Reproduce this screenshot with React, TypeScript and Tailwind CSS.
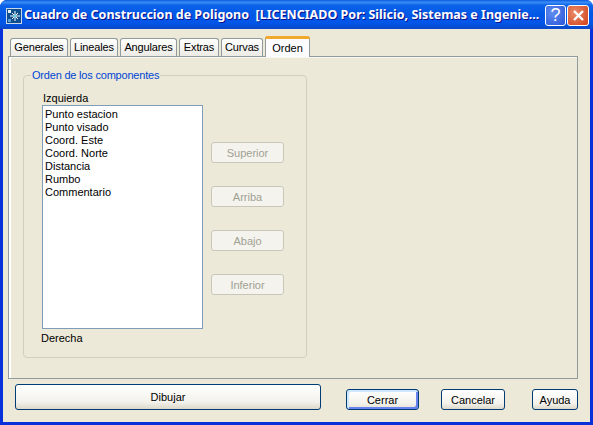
const tabs = [
  { label: "Generales", width: "w-[58px]" },
  { label: "Lineales", width: "w-[48px]" },
  { label: "Angulares", width: "w-[57px]" },
  { label: "Extras", width: "w-[40px]" },
  { label: "Curvas", width: "w-[42px]" },
];

const fields = [
  "Punto estacion",
  "Punto visado",
  "Coord. Este",
  "Coord. Norte",
  "Distancia",
  "Rumbo",
  "Commentario",
];

const moveButtons = ["Superior", "Arriba", "Abajo", "Inferior"];

const AppIcon = () => (
  <svg width="16" height="16" viewBox="0 0 16 16" className="shrink-0 mt-[1px]">
    <rect x="0.5" y="0.5" width="15" height="15" fill="#0f4f8f" stroke="#c8d8e8" />
    <rect x="2" y="2" width="3" height="3" fill="#e8f0f8" />
    <rect x="2" y="11" width="3" height="3" fill="#5aa0d8" />
    <path d="M9 3v10M4 8h10M6 5l6 6M12 5l-6 6" stroke="#ffffff" strokeWidth="1" />
    <rect x="8" y="7" width="2" height="2" fill="#60e0f0" />
  </svg>
);

const App = () => {
  return (
    <div className="w-[593px] h-[425px] flex flex-col bg-[#0831d9] rounded-t-[7px] overflow-hidden font-['Liberation_Sans',sans-serif] text-[11px] text-black">
      <div className="h-[29px] shrink-0 flex items-center pt-[1px] pl-[6px] pr-[4px] bg-[linear-gradient(180deg,#0a5be0_0%,#3a8cf5_8%,#0c62e8_18%,#0058e6_50%,#0255e8_80%,#0a48c8_100%)]">
        <AppIcon />
        <span className="ml-[2px] w-[518px] shrink-0 whitespace-pre font-['Noto_Sans',sans-serif] text-[12.5px] font-bold text-white [text-shadow:1px_1px_#0f1089]">
          Cuadro de Construccion de Poligono  [LICENCIADO Por: Silicio, Sistemas e Ingenie...
        </span>
        <button className="ml-auto w-[21px] h-[21px] rounded-[3px] border border-white bg-[radial-gradient(circle_at_35%_35%,#5f8df0,#2a55d8)] flex items-center justify-center font-['Liberation_Sans',sans-serif] text-[18px] text-white">
          ?
        </button>
        <button className="ml-[1px] w-[22px] h-[21px] rounded-[3px] border border-white bg-[radial-gradient(circle_at_35%_35%,#ea8a68,#d0421c)] flex items-center justify-center">
          <svg width="13" height="13" viewBox="0 0 13 13">
            <path d="M2 2l9 9M11 2l-9 9" stroke="#ffffff" strokeWidth="2.4" />
          </svg>
        </button>
      </div>

      <div className="flex-1 mx-[3px] mb-[3px] bg-[#ece9d8] flex flex-col">
        <div className="h-[27px] shrink-0 flex items-end pl-[7px] gap-[2px]">
          {tabs.map((tab) => (
            <div
              key={tab.label}
              className={`${tab.width} h-[18px] flex items-center justify-center rounded-t-[3px] border border-b-0 border-[#919b9c] bg-[linear-gradient(180deg,#ffffff,#ecebe5)] tracking-[-0.15px]`}
            >
              {tab.label}
            </div>
          ))}
          <div className="w-[45px] h-[21px] -mb-[1px] z-10 flex flex-col items-center rounded-t-[3px] border-x border-[#919b9c] bg-[#fcfcfe]">
            <div className="w-[45px] h-[3px] shrink-0 rounded-t-[3px] bg-[#f0a92c]" />
            <div className="flex-1 flex items-center">Orden</div>
          </div>
        </div>

        <div className="ml-[5px] w-[570px] h-[323px] shrink-0 border border-[#919b9c] bg-[#ece9d8] pl-[14px] pt-[18px] [box-shadow:inset_2px_0_#ffffff,inset_0_1px_#f8f7f0]">
          <div className="w-[284px] h-[283px] rounded-[4px] border border-[#d0d0bf] pl-[18px]">
            <div className="-mt-[7px] ml-[-11px] w-fit px-[1px] h-[13px] leading-[13px] bg-[#ece9d8] text-[#0046d5] tracking-[-0.2px]">
              Orden de los componentes
            </div>
            <div className="mt-[10px] ml-[1px] h-[13px] leading-[13px]">Izquierda</div>
            <div className="flex">
              <div className="w-[161px] h-[224px] shrink-0 border border-[#7f9db9] bg-white pl-[2px] pt-[2px]">
                {fields.map((field) => (
                  <div key={field} className="h-[13px] leading-[13px]">
                    {field}
                  </div>
                ))}
              </div>
              <div className="ml-[8px] pt-[37px] flex flex-col gap-[23px]">
                {moveButtons.map((label) => (
                  <button
                    key={label}
                    className="w-[73px] h-[21px] pt-[1px] rounded-[3px] border border-[#c9c7ba] bg-[#f4f3ee] text-[#a1a192]"
                  >
                    {label}
                  </button>
                ))}
              </div>
            </div>
            <div className="mt-[3px] ml-[-1px] h-[13px] leading-[13px]">Derecha</div>
          </div>
        </div>

        <div className="flex items-end pl-[12px] pt-[5px]">
          <button className="w-[306px] h-[26px] rounded-[3px] border border-[#003c74] bg-[linear-gradient(180deg,#ffffff,#f3f2ec_70%,#dcd8ca)]">
            Dibujar
          </button>
          <button className="ml-[25px] w-[73px] h-[21px] pt-[1px] rounded-[3px] border border-[#003c74] bg-[linear-gradient(180deg,#ffffff,#f3f2ec_70%,#e3dfd2)] [box-shadow:inset_2px_2px_#cee7ff,inset_-2px_-2px_#6982ee]">
            Cerrar
          </button>
          <button className="ml-[22px] w-[64px] h-[21px] pt-[1px] rounded-[3px] border border-[#003c74] bg-[linear-gradient(180deg,#ffffff,#f3f2ec_70%,#dcd8ca)]">
            Cancelar
          </button>
          <button className="ml-[27px] w-[46px] h-[21px] pt-[1px] rounded-[3px] border border-[#003c74] bg-[linear-gradient(180deg,#ffffff,#f3f2ec_70%,#dcd8ca)]">
            Ayuda
          </button>
        </div>
      </div>
    </div>
  );
};

export default App;
